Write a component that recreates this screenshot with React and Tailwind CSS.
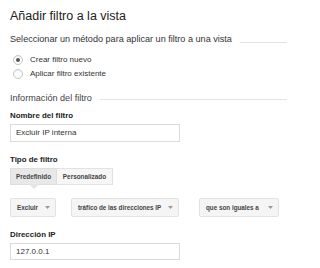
import React from "react";

const Radio = ({ checked, label }) => (
  <label className="flex items-center h-[14px]">
    <span className="w-[10px] h-[10px] ml-[3px] rounded-full border border-[#c4c4c4] bg-white flex items-center justify-center shadow-[inset_0_1px_1px_rgba(0,0,0,0.08)]">
      {checked && <span className="w-[4px] h-[4px] rounded-full bg-[#555]" />}
    </span>
    <span className="ml-[7px] text-[8px] text-[#333]">{label}</span>
  </label>
);

const Select = ({ label, width }) => (
  <div
    className={`h-[19px] ${width} flex items-center justify-between pl-[6px] pr-[5px] bg-[#f5f5f5] border border-[#e2e2e2] rounded-[2px]`}
  >
    <span className="text-[6.3px] font-bold text-[#444] whitespace-nowrap">{label}</span>
    <svg width="5" height="3" viewBox="0 0 5 3">
      <path d="M0 0h5L2.5 3Z" fill="#999" />
    </svg>
  </div>
);

export default function App() {
  return (
    <div
      className="w-[287px] h-[268px] bg-white overflow-hidden pl-[10px] pt-[8px]"
      style={{ fontFamily: '"Liberation Sans", Arial, sans-serif' }}
    >
      <h1 className="text-[12.5px] leading-[16px] text-[#222]">Añadir filtro a la vista</h1>

      {/* Método */}
      <div className="flex items-center mt-[10px] h-[12px]">
        <span className="text-[9.1px] text-[#333] whitespace-nowrap">
          Seleccionar un método para aplicar un filtro a una vista
        </span>
        <span className="flex-1 h-px bg-[#e3e3e3] ml-[8px] mt-[4px]" />
      </div>

      <div className="mt-[7px] flex flex-col">
        <Radio checked label="Crear filtro nuevo" />
        <Radio label="Aplicar filtro existente" />
      </div>

      {/* Información */}
      <div className="flex items-center mt-[12px] h-[12px]">
        <span className="text-[9.1px] text-[#444] whitespace-nowrap">Información del filtro</span>
        <span className="flex-1 h-px bg-[#e3e3e3] ml-[8px]" />
      </div>

      <div className="mt-[5px] text-[7.9px] font-bold text-[#222] leading-[12px]">Nombre del filtro</div>
      <div className="mt-[2px] w-[170px] h-[18px] border border-[#dcdcdc] flex items-center pl-[5px] text-[8px] text-[#333]">
        Excluir IP interna
      </div>

      <div className="mt-[12px] text-[7.9px] font-bold text-[#222] leading-[12px]">Tipo de filtro</div>
      <div className="mt-[2px] flex">
        <div className="relative h-[17px] w-[47px] flex items-center justify-center bg-[#e8e8e8] border border-[#dedede] text-[6.4px] font-bold text-[#444]">
          Predefinido
          <span className="absolute left-1/2 -translate-x-1/2 top-full w-0 h-0 border-l-[5px] border-r-[5px] border-t-[5px] border-l-transparent border-r-transparent border-t-[#e4e4e4]" />
        </div>
        <div className="h-[17px] w-[56px] flex items-center justify-center bg-[#f6f6f6] border border-l-0 border-[#e2e2e2] text-[6.4px] font-bold text-[#444]">
          Personalizado
        </div>
      </div>

      <div className="mt-[13px] flex">
        <Select label="Excluir" width="w-[46px]" />
        <div className="ml-[15px]">
          <Select label="tráfico de las direcciones IP" width="w-[108px]" />
        </div>
        <div className="ml-[20px]">
          <Select label="que son iguales a" width="w-[80px]" />
        </div>
      </div>

      <div className="mt-[12px] text-[7.9px] font-bold text-[#222] leading-[12px]">Dirección IP</div>
      <div className="mt-[2px] w-[170px] h-[17px] border border-[#dcdcdc] flex items-center pl-[5px] text-[8px] text-[#333]">
        127.0.0.1
      </div>
    </div>
  );
}
